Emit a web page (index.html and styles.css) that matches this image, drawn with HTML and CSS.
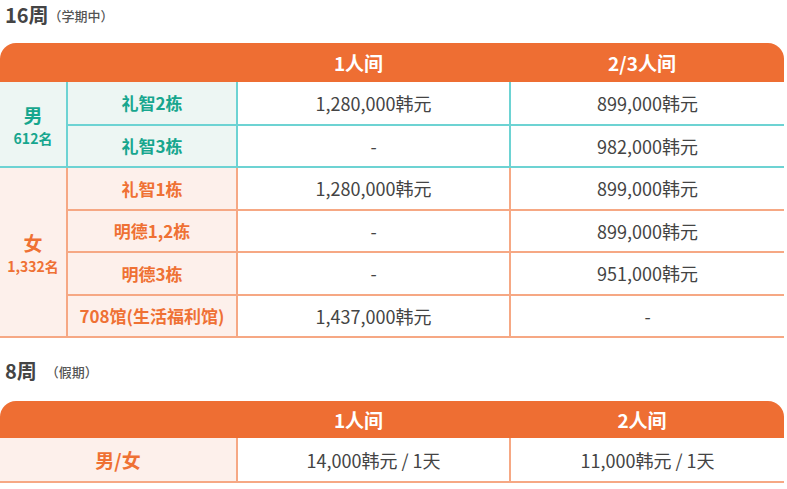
FILE: index.html
```html
<!DOCTYPE html>
<html lang="zh">
<head>
<meta charset="utf-8">
<link rel="stylesheet" href="styles.css">
</head>
<body>
<div class="page">
  <h2 class="title">16周<span class="sub">（学期中）</span></h2>
  <table class="fees">
    <colgroup><col class="c1"><col class="c2"><col class="c3"><col class="c4"></colgroup>
    <thead>
      <tr><th class="tl"></th><th></th><th class="h3">1人间</th><th class="tr h4">2/3人间</th></tr>
    </thead>
    <tbody>
      <tr class="m">
        <td class="grp" rowspan="2"><div class="g">男</div><div class="n">612名</div></td>
        <td class="bld">礼智2栋</td><td>1,280,000韩元</td><td>899,000韩元</td>
      </tr>
      <tr class="m">
        <td class="bld">礼智3栋</td><td>-</td><td>982,000韩元</td>
      </tr>
      <tr class="f">
        <td class="grp" rowspan="4"><div class="g">女</div><div class="n">1,332名</div></td>
        <td class="bld">礼智1栋</td><td>1,280,000韩元</td><td>899,000韩元</td>
      </tr>
      <tr class="f"><td class="bld">明德1,2栋</td><td>-</td><td>899,000韩元</td></tr>
      <tr class="f"><td class="bld">明德3栋</td><td>-</td><td>951,000韩元</td></tr>
      <tr class="f"><td class="bld">708馆(生活福利馆)</td><td>1,437,000韩元</td><td>-</td></tr>
    </tbody>
  </table>

  <h2 class="title t2">8周<span class="sub wide">（假期）</span></h2>
  <table class="fees small">
    <colgroup><col class="c12"><col class="c3"><col class="c4"></colgroup>
    <thead>
      <tr><th class="tl"></th><th class="h3">1人间</th><th class="tr h4">2人间</th></tr>
    </thead>
    <tbody>
      <tr class="f">
        <td class="bld big">男/女</td><td>14,000韩元 / 1天</td><td>11,000韩元 / 1天</td>
      </tr>
    </tbody>
  </table>
</div>
</body>
</html>
```

FILE: styles.css
```css
* { box-sizing: border-box; }
html, body { margin: 0; padding: 0; background: #fff; }
body {
  font-family: "Noto Sans CJK SC", "Noto Sans", sans-serif;
  color: #444;
}
.page { width: 784px; }
.title {
  margin: 0;
  padding: 2px 0 0 5px;
  height: 43px;
  font-size: 20px;
  font-weight: 700;
  color: #444;
  line-height: 26px;
}
.title .sub {
  font-size: 13px;
  font-weight: 500;
  color: #555;
  margin-left: 0;
  vertical-align: 2px;
}
.title .sub.wide { margin-left: 9px; }
.t2 { margin-top: 14px; height: 49px; padding-top: 6px; }

.fees {
  width: 784px;
  border-collapse: collapse;
  table-layout: fixed;
}
.c1 { width: 67px; }
.c2 { width: 170px; }
.c12 { width: 237px; }
.c3 { width: 273px; }
.c4 { width: 274px; }

.fees th {
  background: #ee6e33;
  color: #fff;
  font-size: 19px;
  font-weight: 700;
  height: 39px;
  padding: 0;
  text-align: center;
  border: 0;
}
.fees.small th { height: 37px; }
.fees th.h3 { padding-right: 30px; }
.fees th.h4 { padding-right: 10px; }
.fees th.tl { border-top-left-radius: 16px; }
.fees th.tr { border-top-right-radius: 16px; }

.fees td {
  height: 42.5px;
  padding: 0;
  text-align: center;
  font-size: 18px;
  color: #444;
  background: #fff;
}
.fees.small td { height: 44px; }
.fees tr.m td { border: 2px solid #6dd3d3; }
.fees tr.m td:last-child { border-right: 0; }
.fees tr.f td { border: 2px solid #f6a884; }
.fees tr.f td:last-child { border-right: 0; }
.fees tr.m td.grp, .fees tr.f td.grp { border-left: 0; }
.fees tr.f td.big { border-left: 0; }
.fees tr.m:first-child td { border-top: 0; }
.fees.small tr.f td { border-top: 0; }
.fees tr.f td.grp, .fees tr.f td.bld { background: #fdf0eb; color: #ef7134; }
.fees tr.m td.grp, .fees tr.m td.bld { background: #edf6f3; color: #17a68e; }
.fees td.bld { font-weight: 700; font-size: 17px; }
.fees td.grp .g { font-size: 19px; font-weight: 700; line-height: 28px; }
.fees td.grp .n { font-size: 14px; font-weight: 700; line-height: 18px; }
.fees td.bld.big { font-size: 19px; }
```
